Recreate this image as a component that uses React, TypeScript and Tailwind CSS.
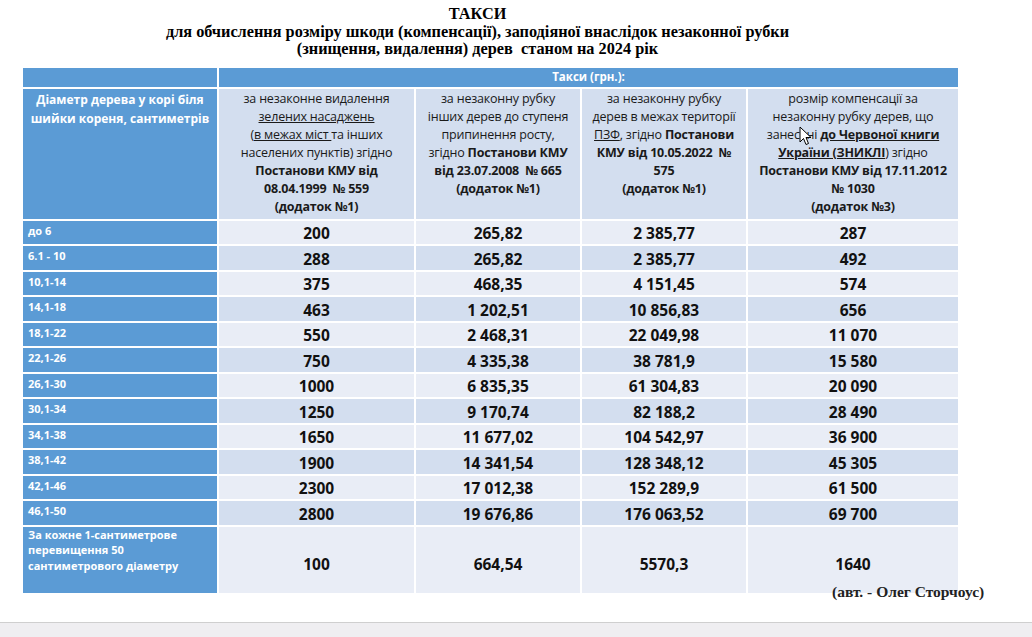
import React from "react";

const rows: [string, string, string, string, string][] = [
  ["до 6", "200", "265,82", "2 385,77", "287"],
  ["6.1 - 10", "288", "265,82", "2 385,77", "492"],
  ["10,1-14", "375", "468,35", "4 151,45", "574"],
  ["14,1-18", "463", "1 202,51", "10 856,83", "656"],
  ["18,1-22", "550", "2 468,31", "22 049,98", "11 070"],
  ["22,1-26", "750", "4 335,38", "38 781,9", "15 580"],
  ["26,1-30", "1000", "6 835,35", "61 304,83", "20 090"],
  ["30,1-34", "1250", "9 170,74", "82 188,2", "28 490"],
  ["34,1-38", "1650", "11 677,02", "104 542,97", "36 900"],
  ["38,1-42", "1900", "14 341,54", "128 348,12", "45 305"],
  ["42,1-46", "2300", "17 012,38", "152 289,9", "61 500"],
  ["46,1-50", "2800", "19 676,86", "176 063,52", "69 700"],
];

const sans = "font-['Open_Sans','Noto_Sans',sans-serif]";

export default function App() {
  return (
    <div className="relative w-[1032px] h-[637px] bg-white overflow-hidden flex flex-col">
      <div className="pt-[5px] ml-[23px] w-[935px] pr-[26px] text-center font-['Liberation_Serif','Times_New_Roman',serif] font-bold text-[16.3px] leading-[17.5px] text-black">
        <div>ТАКСИ</div>
        <div>для обчислення розміру шкоди (компенсації), заподіяної внаслідок незаконної рубки</div>
        <div>(знищення, видалення) дерев&nbsp; станом на 2024 рік</div>
      </div>

      <div className={`mt-[10px] ml-[23px] w-[935px] grid grid-cols-[194px_195px_164px_164px_210px] grid-rows-[19px_130px_repeat(12,23.5px)_66px] gap-[2px] bg-white ${sans}`}>
        <div className="bg-[#5b9bd5]" />
        <div className="col-span-4 bg-[#5b9bd5] flex items-center justify-center text-white font-bold text-[11.5px]">
          Такси (грн.):
        </div>

        <div className="bg-[#5b9bd5] text-white font-bold text-[12px] leading-[19px] text-center pt-[1px]">
          Діаметр дерева у корі біля
          <br />
          шийки кореня, сантиметрів
        </div>
        <div className="bg-[#d3deef] text-[#1a1a1a] text-[12.5px] leading-[18px] text-center pt-[1px] whitespace-nowrap tracking-[-0.2px]">
          за незаконне видалення
          <br />
          <span className="underline">зелених насаджень</span>
          <br />(<span className="underline">в межах міст </span>та інших
          <br />
          населених пунктів) згідно
          <br />
          <b>Постанови КМУ від</b>
          <br />
          <b>08.04.1999&nbsp; № 559</b>
          <br />
          <b>(додаток №1)</b>
        </div>
        <div className="bg-[#d3deef] text-[#1a1a1a] text-[12.5px] leading-[18px] text-center pt-[1px] whitespace-nowrap tracking-[-0.2px]">
          за незаконну рубку
          <br />
          інших дерев до ступеня
          <br />
          припинення росту,
          <br />
          згідно <b>Постанови КМУ</b>
          <br />
          <b>від 23.07.2008&nbsp; № 665</b>
          <br />
          <b>(додаток №1)</b>
        </div>
        <div className="bg-[#d3deef] text-[#1a1a1a] text-[12.5px] leading-[18px] text-center pt-[1px] whitespace-nowrap tracking-[-0.2px]">
          за незаконну рубку
          <br />
          дерев в межах території
          <br />
          <span className="underline">ПЗФ</span>, згідно <b>Постанови</b>
          <br />
          <b>КМУ від 10.05.2022&nbsp; №</b>
          <br />
          <b>575</b>
          <br />
          <b>(додаток №1)</b>
        </div>
        <div className="bg-[#d3deef] text-[#1a1a1a] text-[12.5px] leading-[18px] text-center pt-[1px] whitespace-nowrap tracking-[-0.2px]">
          розмір компенсації за
          <br />
          незаконну рубку дерев, що
          <br />
          занесені <b className="underline">до Червоної книги</b>
          <br />
          <b className="underline">України (ЗНИКЛІ</b>) згідно
          <br />
          <b>Постанови КМУ від 17.11.2012</b>
          <br />
          <b>№ 1030</b>
          <br />
          <b>(додаток №3)</b>
        </div>

        {rows.map((r, i) => {
          const bg = i % 2 === 0 ? "bg-[#e9edf6]" : "bg-[#d3deef]";
          return (
            <React.Fragment key={r[0]}>
              <div className="bg-[#5b9bd5] text-white font-bold text-[11px] leading-[14px] pl-[5px] pt-[3px]">
                {r[0]}
              </div>
              {r.slice(1).map((v, j) => (
                <div key={j} className={`${bg} flex items-center justify-center font-bold text-[15.5px] text-[#111] pt-[3px]`}>
                  {v}
                </div>
              ))}
            </React.Fragment>
          );
        })}

        <div className="bg-[#5b9bd5] text-white font-bold text-[11px] leading-[15.5px] pl-[5px]">
          За кожне 1-сантиметрове
          <br />
          перевищення 50
          <br />
          сантиметрового діаметру
        </div>
        {["100", "664,54", "5570,3", "1640"].map((v, j) => (
          <div key={j} className="bg-[#e9edf6] flex items-center justify-center font-bold text-[15.5px] text-[#111] pt-[10px]">
            {v}
          </div>
        ))}
      </div>

      <div className="-mt-[9px] ml-[832px] relative font-['Liberation_Serif','Times_New_Roman',serif] font-bold text-[15.5px] leading-[16px] text-[#222] whitespace-nowrap">
        (авт. - Олег Сторчоус)
      </div>

      <div className="mt-auto h-[15px] bg-[#efeef1] border-t border-[#cfcfcf]" />

      <svg className="absolute left-[799px] top-[126px]" width="13" height="20" viewBox="0 0 13 20">
        <path d="M1 1 L1 16 L4.5 12.5 L7 18.5 L9.5 17.5 L7 11.5 L12 11.5 Z" fill="#fff" stroke="#000" strokeWidth="1" strokeLinejoin="round" />
      </svg>
    </div>
  );
}
